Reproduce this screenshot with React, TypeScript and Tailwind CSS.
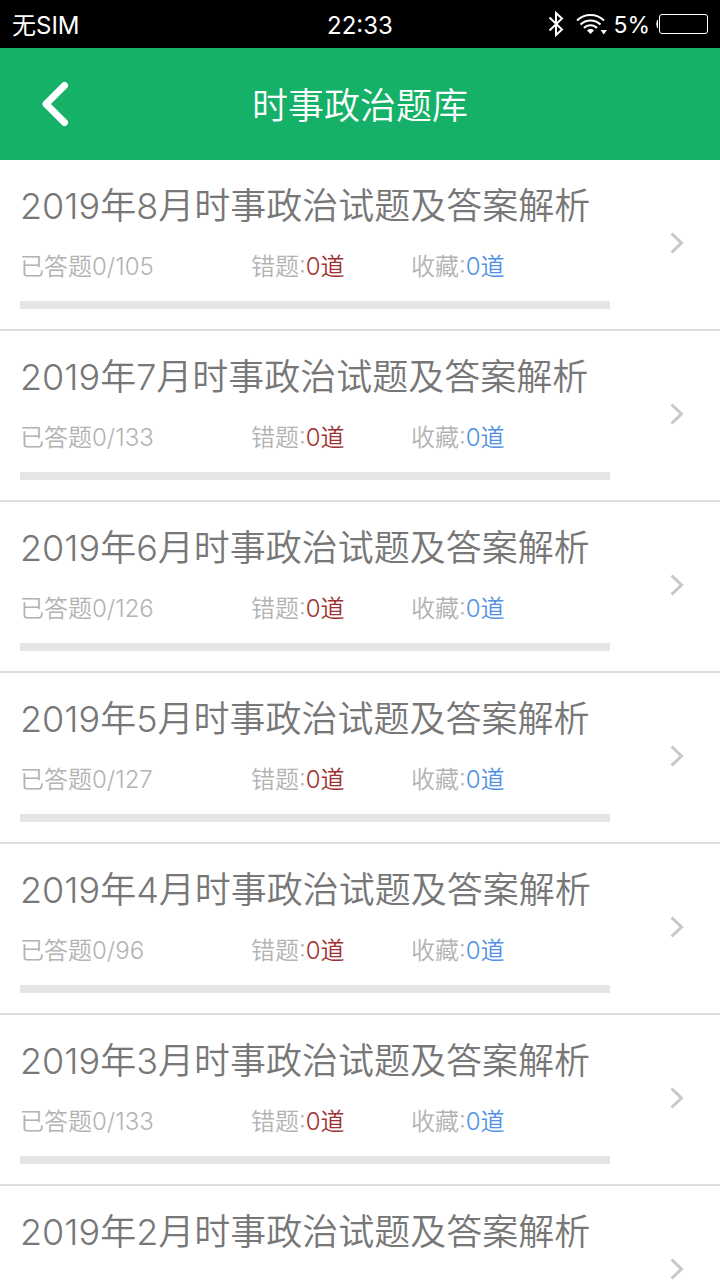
import React from "react";

type Paper = {
  month: number;
  total: number;
  done: number;
  wrong: number;
  saved: number;
};

const papers: Paper[] = [
  { month: 8, total: 105, done: 0, wrong: 0, saved: 0 },
  { month: 7, total: 133, done: 0, wrong: 0, saved: 0 },
  { month: 6, total: 126, done: 0, wrong: 0, saved: 0 },
  { month: 5, total: 127, done: 0, wrong: 0, saved: 0 },
  { month: 4, total: 96, done: 0, wrong: 0, saved: 0 },
  { month: 3, total: 133, done: 0, wrong: 0, saved: 0 },
  { month: 2, total: 118, done: 0, wrong: 0, saved: 0 },
];

function BluetoothIcon() {
  return (
    <svg width="16" height="26" viewBox="0 0 16 26" fill="none" stroke="currentColor" strokeWidth="2" aria-hidden="true">
      <path d="M1.500 6.500 14 18.500 8 24V2L14 7.500 1.500 19.500" />
    </svg>
  );
}

function WifiIcon() {
  return (
    <svg width="31" height="22" viewBox="0 0 31 22" fill="none" stroke="currentColor" strokeWidth="2" aria-hidden="true">
      <path d="M1 7.500C8.500 0 20.500 0 28 7.500" />
      <path d="M4.500 11.500C10 6 19 6 24.500 11.500" />
      <path d="M8 15C11.500 11.300 17.500 11.300 21 15" />
      <path d="M11 17.500C13 15.600 16 15.600 18 17.500L14.500 21Z" fill="currentColor" stroke="none" />
      <path d="M24.500 17H31L27.750 21.500Z" fill="currentColor" stroke="none" />
    </svg>
  );
}

function BatteryIcon() {
  return (
    <svg width="52" height="20" viewBox="0 0 52 20" fill="none" stroke="currentColor" aria-hidden="true">
      <path d="M1.500 6Q0 10 1.500 14Z" fill="currentColor" />
      <rect x="3.500" y="0.500" width="48" height="19" rx="2.500" />
    </svg>
  );
}

function StatusBar() {
  return (
    <div className="grid h-12 shrink-0 grid-cols-3 items-center bg-black px-3 text-2xl font-normal text-white">
      <span className="pt-1">无SIM</span>
      <span className="pt-1 text-center">22:33</span>
      <div className="flex items-center justify-end">
        <BluetoothIcon />
        <span className="ml-3">
          <WifiIcon />
        </span>
        <span className="mx-1.5 pt-0.5 text-[23px]">5%</span>
        <BatteryIcon />
      </div>
    </div>
  );
}

function Header() {
  return (
    <header className="grid h-28 shrink-0 grid-cols-[112px_1fr_112px] items-center bg-[#15b168] text-white">
      <button type="button" aria-label="返回" className="flex h-full items-center pl-10">
        <svg width="30" height="46" viewBox="0 0 30 46" fill="none" stroke="currentColor" strokeWidth="7" strokeLinecap="round" strokeLinejoin="round" aria-hidden="true">
          <path d="M24.500 4.500 6 23 24.500 41.500" />
        </svg>
      </button>
      <h1 className="pt-1 text-center text-4xl">时事政治题库</h1>
    </header>
  );
}

function PaperRow({ paper }: { paper: Paper }) {
  const percent = (paper.done / paper.total) * 100;

  return (
    <li className="border-b-2 border-[#dedede]">
      <a href={`#paper-${paper.month}`} className="flex items-center pr-9 pl-5">
        <div className="flex-1 pt-6 pb-5">
          <h2 className="text-4xl leading-[44px] text-[#777777]">
            2019年{paper.month}月时事政治试题及答案解析
          </h2>
          <div className="mt-[21px] grid grid-cols-[231px_160px_1fr] text-2xl leading-9 text-[#b3b3b3]">
            <span>
              已答题{paper.done}/{paper.total}
            </span>
            <span>
              错题:<span className="text-[#a03030]">{paper.wrong}道</span>
            </span>
            <span>
              收藏:<span className="text-[#5090e6]">{paper.saved}道</span>
            </span>
          </div>
          <div className="mt-4 h-2 bg-[#e5e5e5]">
            <div className="h-full bg-[#15b168]" style={{ width: `${percent}%` }} />
          </div>
        </div>
        <svg className="mb-1 ml-15 shrink-0" width="14" height="22" viewBox="0 0 14 22" fill="none" stroke="#c7c7cc" strokeWidth="3" aria-hidden="true">
          <path d="M1.500 1.500 11.500 11 1.500 20.500" />
        </svg>
      </a>
    </li>
  );
}

function App() {
  return (
    <div className="flex h-screen flex-col overflow-hidden bg-white font-['Inter','Noto_Sans_CJK_SC',sans-serif] font-[350]">
      <StatusBar />
      <Header />
      <main className="min-h-0 flex-1 overflow-y-auto [scrollbar-width:none]">
        <ul>
          {papers.map((paper) => (
            <PaperRow key={paper.month} paper={paper} />
          ))}
        </ul>
      </main>
    </div>
  );
}

export default App;
